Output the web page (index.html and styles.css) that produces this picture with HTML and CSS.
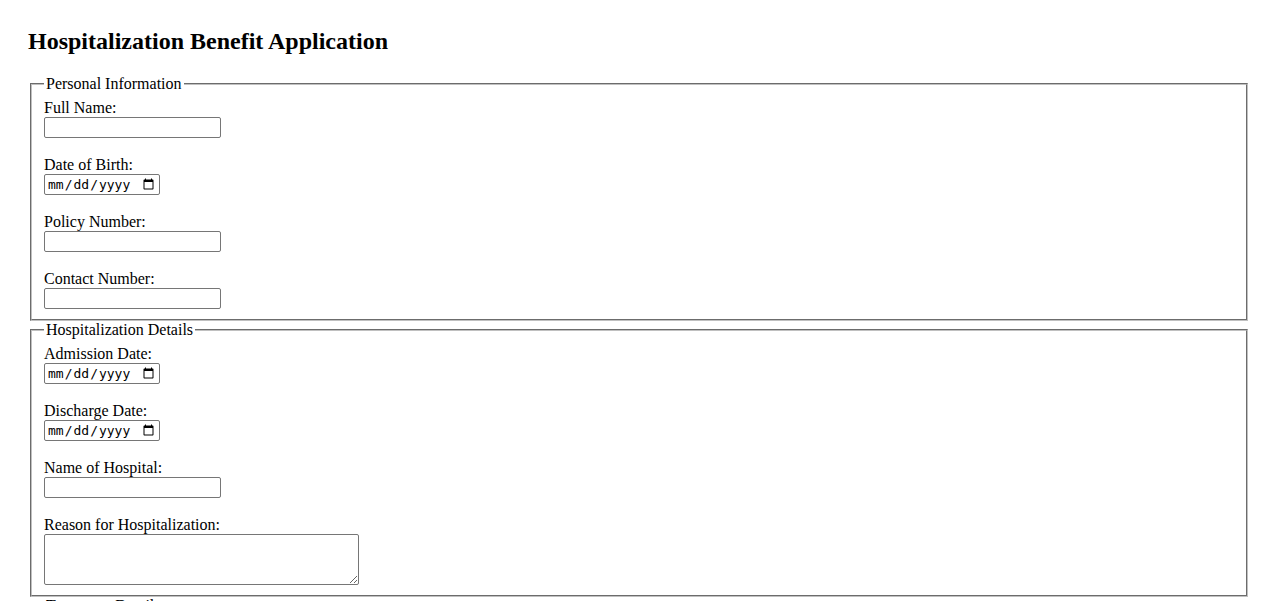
FILE: index.html
```html
<!DOCTYPE html>
<html lang="en">
<head>
<meta charset="utf-8">
<title>Hospitalization Benefit Application</title>
<link rel="stylesheet" href="styles.css">
</head>
<body>
<h2 class="title">Hospitalization Benefit Application</h2>
<form class="form">
  <fieldset class="group">
    <legend class="group-title">Personal Information</legend>
    <label class="field-label" for="fullName">Full Name:</label><br>
    <input class="text-input" type="text" id="fullName"><br><br>
    <label class="field-label" for="dob">Date of Birth:</label><br>
    <input class="date-input" type="date" id="dob"><br><br>
    <label class="field-label" for="policy">Policy Number:</label><br>
    <input class="text-input" type="text" id="policy"><br><br>
    <label class="field-label" for="contact">Contact Number:</label><br>
    <input class="text-input" type="text" id="contact">
  </fieldset>
  <fieldset class="group">
    <legend class="group-title">Hospitalization Details</legend>
    <label class="field-label" for="admission">Admission Date:</label><br>
    <input class="date-input" type="date" id="admission"><br><br>
    <label class="field-label" for="discharge">Discharge Date:</label><br>
    <input class="date-input" type="date" id="discharge"><br><br>
    <label class="field-label" for="hospital">Name of Hospital:</label><br>
    <input class="text-input" type="text" id="hospital"><br><br>
    <label class="field-label" for="reason">Reason for Hospitalization:</label><br>
    <textarea class="text-area" id="reason"></textarea>
  </fieldset>
  <fieldset class="group">
    <legend class="group-title">Treatment Details</legend>
    <label class="field-label" for="doctor">Attending Doctor:</label><br>
    <input class="text-input" type="text" id="doctor">
  </fieldset>
</form>
</body>
</html>
```
FILE: styles.css
```css
html, body {
  background: #ffffff;
}
body {
  margin: 0;
  padding: 28px;
  font-family: "Liberation Serif", "Times New Roman", serif;
  font-size: 16px;
  color: #000;
}
.title {
  margin: 0 0 20px 0;
  font-size: 24px;
  font-weight: bold;
}
.form {
  margin: 0;
}
.group {
  margin: 0 2px;
  padding: 6px 12px 10px 12px;
  border: 2px groove rgb(192, 192, 192);
}
.group-title {
  padding: 0 2px;
}
.text-input {
  box-sizing: border-box;
  width: 177px;
  height: 21px;
  margin: 0;
  padding: 1px 2px;
  border: 1px solid #767676;
  border-radius: 2px;
  font-family: "Liberation Sans", Arial, sans-serif;
  font-size: 13.33px;
}
.date-input {
  box-sizing: border-box;
  width: 116px;
  height: 21px;
  margin: 0;
  padding: 1px 2px;
  border: 1px solid #767676;
  border-radius: 2px;
  font-family: "DejaVu Sans Mono", "Liberation Mono", monospace;
  font-size: 13px;
}
.text-area {
  box-sizing: border-box;
  width: 315px;
  height: 51px;
  margin: 0;
  padding: 2px;
  border: 1px solid #767676;
  border-radius: 2px;
  font-family: "Liberation Mono", monospace;
  font-size: 13.33px;
  vertical-align: bottom;
}
```
